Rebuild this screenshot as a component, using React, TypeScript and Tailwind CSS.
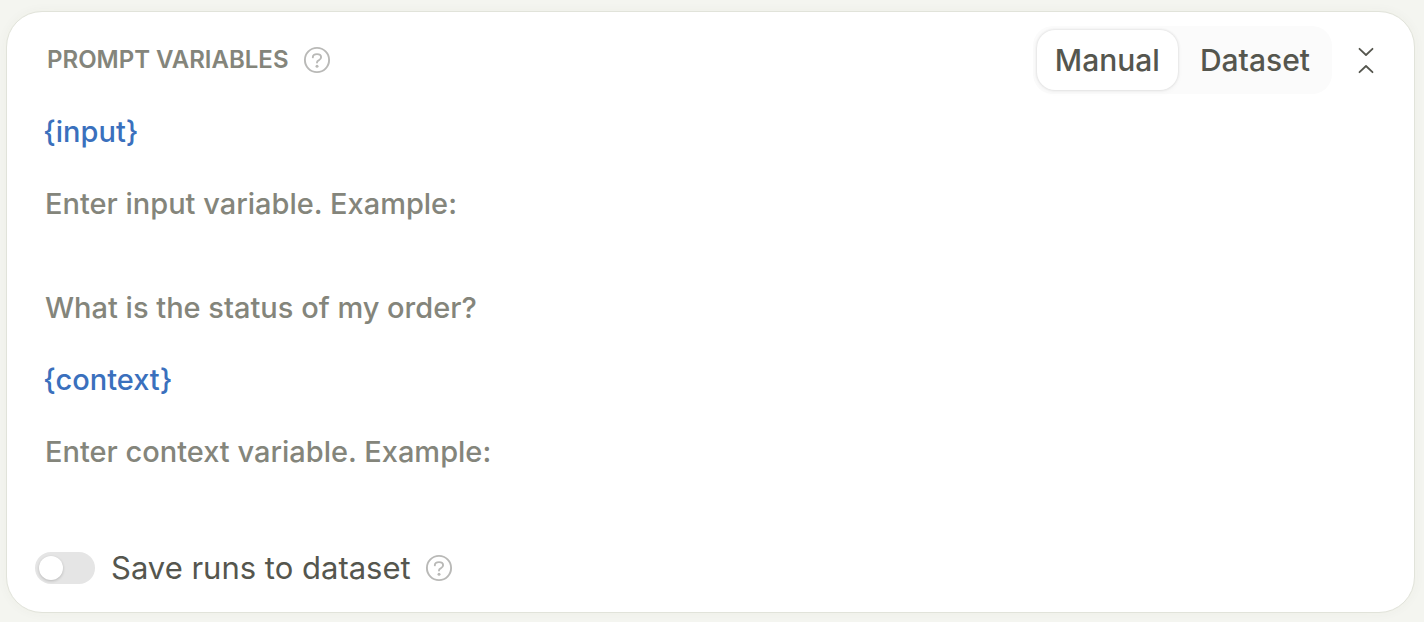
import { useState } from "react";

function HelpIcon() {
  return (
    <svg width="28" height="28" viewBox="0 0 28 28" fill="none" stroke="#b9b9b7" strokeWidth="1.9" strokeLinecap="round" strokeLinejoin="round" aria-hidden="true">
      <circle cx="14" cy="14" r="12.1" />
      <path d="M9.8 11.4C9.9 9.3 11.7 8.1 14 8.1C16.4 8.1 18.1 9.3 18.1 11.3C18.1 13 17 13.7 15.7 14.4C14.5 15 14 15.5 14 16.5" />
      <circle cx="14" cy="20.2" r="1.5" fill="#b9b9b7" stroke="none" />
    </svg>
  );
}

const variables = [
  {
    name: "input",
    rows: 3,
    placeholder: "Enter input variable. Example:\n\nWhat is the status of my order?",
  },
  { name: "context", rows: 1, placeholder: "Enter context variable. Example:" },
];

const modes = ["Manual", "Dataset"];

export default function App() {
  const [mode, setMode] = useState("Manual");
  const [save, setSave] = useState(false);

  return (
    <main className="min-h-screen bg-[#f4f5f0] pt-[11px] pr-[9px] pb-[9px] pl-1.5 font-['Inter',sans-serif] text-[#55564e]">
      <section className="rounded-[36px] border border-[#e1e3da] bg-white pt-3.5 pb-[22px] shadow-[0_0_12px_rgba(80,80,60,0.04)]">
        <header className="flex items-center justify-between pr-[34px] pl-10">
          <div className="flex items-center gap-3.5">
            <h2 className="text-2xl font-semibold text-[#84857b]">PROMPT VARIABLES</h2>
            <button type="button" aria-label="About prompt variables">
              <HelpIcon />
            </button>
          </div>
          <div className="flex items-center gap-5">
            <div className="flex gap-1 rounded-[20px] bg-[#fbfbfb] p-1">
              {modes.map((m) => (
                <button
                  key={m}
                  type="button"
                  aria-pressed={mode === m}
                  onClick={() => setMode(m)}
                  className={
                    "rounded-[18px] px-[18px] py-[11px] text-[30px] leading-[38px] font-medium " +
                    (mode === m ? "bg-white shadow-[0_0_3px_rgba(0,0,0,0.16),0_2px_6px_rgba(0,0,0,0.03)]" : "")
                  }
                >
                  {m}
                </button>
              ))}
            </div>
            <button type="button" aria-label="Collapse">
              <svg width="28" height="32" viewBox="0 0 28 32" fill="none" stroke="#55564e" strokeWidth="1.8" strokeLinecap="round" strokeLinejoin="round" aria-hidden="true">
                <path d="M7.5 4.8L14 11L20.5 4.8M7.5 28.2L14 22L20.5 28.2" />
              </svg>
            </button>
          </div>
        </header>

        <div className="mt-3 flex flex-col gap-5 px-9 text-[29px] leading-[52px] font-medium">
          {variables.map((v) => (
            <div key={v.name} className="flex flex-col gap-5">
              <label htmlFor={v.name} className="text-[#3a70bd]">{`{${v.name}}`}</label>
              <textarea
                id={v.name}
                rows={v.rows}
                placeholder={v.placeholder}
                className="block w-full resize-none overflow-hidden px-0.5 outline-none placeholder:text-[#84857b] placeholder:opacity-100"
              />
            </div>
          ))}
        </div>

        <footer className="mt-[68px] flex items-center gap-3.5 px-7">
          <label className="flex cursor-pointer items-center gap-4 text-[31px] leading-[44px]">
            <input
              type="checkbox"
              role="switch"
              checked={save}
              onChange={(e) => setSave(e.target.checked)}
              className="h-8 w-[60px] appearance-none rounded-full bg-[#e5e5e5] p-1 before:block before:size-6 before:rounded-full before:bg-white before:shadow-[0_1px_3px_rgba(0,0,0,0.2)] checked:bg-[#3a70bd] checked:before:ml-7"
            />
            Save runs to dataset
          </label>
          <button type="button" aria-label="About saving runs">
            <HelpIcon />
          </button>
        </footer>
      </section>
    </main>
  );
}
